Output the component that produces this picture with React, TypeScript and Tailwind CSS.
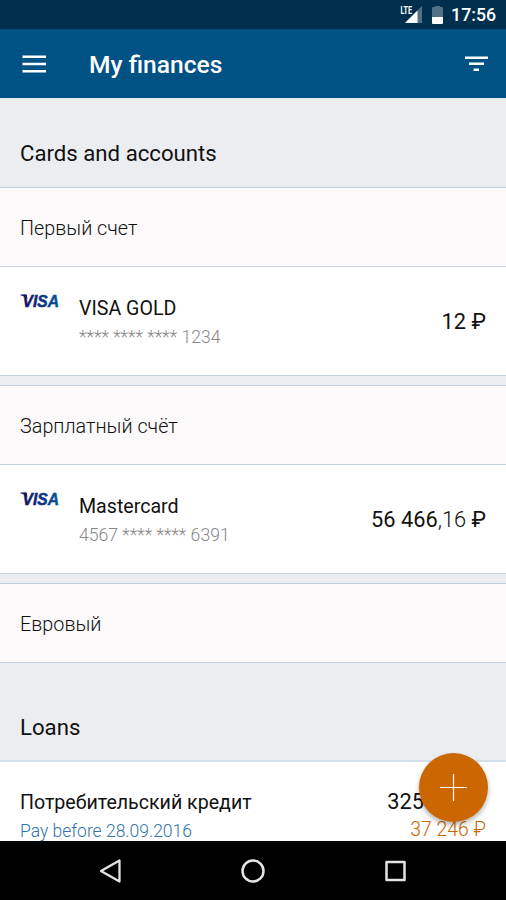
import type { ReactNode } from 'react';

const accounts = [
    {
        name: 'Первый счет',
        card: { title: 'VISA GOLD', number: '**** **** **** 1234', whole: '12', cents: '' }
    },
    {
        name: 'Зарплатный счёт',
        card: { title: 'Mastercard', number: '4567 **** **** 6391', whole: '56 466', cents: ',16' }
    }
];

export default function App() {
    return (
        <div className="relative flex h-[900px] w-[506px] flex-col overflow-hidden bg-[#ebedf1] font-['Roboto',sans-serif] text-[#111]">
            <StatusBar />
            <AppBar />
            <main className="min-h-0 flex-1 overflow-hidden">
                <SectionTitle className="h-[89px] pt-[23px]">Cards and accounts</SectionTitle>
                {accounts.map((account) => (
                    <section key={account.name} className="mb-[9px] border-b border-[#c3d1df]">
                        <AccountName>{account.name}</AccountName>
                        <CardRow {...account.card} />
                    </section>
                ))}
                <AccountName>Евровый</AccountName>
                <SectionTitle className="h-[97px] pt-[32px]">Loans</SectionTitle>
                <LoanRow />
            </main>
            <NavigationBar />
            <button
                aria-label="Add"
                className="absolute top-[753px] left-[419px] flex size-[69px] items-center justify-center rounded-full bg-[#cb6601] shadow-[0_3px_5px_rgba(0,0,0,0.3)]"
            >
                <svg width="27" height="27" viewBox="0 0 27 27" stroke="#fff" strokeWidth="1.2">
                    <path d="M13.5 0v27M0 13.5h27" />
                </svg>
            </button>
        </div>
    );
}

const StatusBar = () => (
    <div className="flex h-[29px] shrink-0 items-center justify-end bg-[#00304e] pr-[10px] text-white">
        <svg className="mr-[7px]" width="44" height="29" viewBox="0 0 44 29">
            <path d="M22 6v17H5z" fill="#507083" />
            <path d="M17.5 10.5V23H5z" fill="#fff" />
            <path d="M0 4.500h12.500v10h-12.500z" fill="#00304e" />
            <text x="0.500" y="13.700" fontSize="10.500" fontWeight="700" textLength="11.500" lengthAdjust="spacingAndGlyphs" fill="#fff">LTE</text>
            <path d="M32 8q0-1 1-1h2V6h5v1h2q1 0 1 1v10H32z" fill="#507083" />
            <path d="M32 17h11v6q0 1-1 1h-9q-1 0-1-1z" fill="#fff" />
        </svg>
        <span className="pt-[3px] text-[17.7px] leading-none font-medium">17:56</span>
    </div>
);

const AppBar = () => (
    <header className="flex h-[69px] shrink-0 items-center bg-[#005184] px-[17px] text-white">
        <svg width="34" height="34" viewBox="0 0 34 34" fill="#fff">
            <path d="M5.500 8.500h23.500v2.500h-23.500zM5.500 15.700h23.500v2.500h-23.500zM5.500 23h23.500v2.500h-23.500z" />
        </svg>
        <h1 className="ml-[38px] flex-1 pt-[4px] text-[24.6px] font-medium">My finances</h1>
        <svg width="34" height="34" viewBox="0 0 34 34" fill="#fff">
            <path d="M10 9.500h23v2.500h-23zM14 15.500h15v2.500h-15zM18.500 21.500h5.500v2.500h-5.500z" />
        </svg>
    </header>
);

const SectionTitle = ({ className, children }: { className: string; children: ReactNode }) => (
    <h2 className={`flex items-center px-5 text-[22.2px] ${className}`}>{children}</h2>
);

const AccountName = ({ children }: { children: ReactNode }) => (
    <h3 className="flex h-[80px] items-center border-y border-[#c3d1df] bg-[#fbf9fa] px-5 pt-[4px] text-[19.8px] font-light">
        {children}
    </h3>
);

type CardRowProps = { title: string; number: string; whole: string; cents: string };

const CardRow = ({ title, number, whole, cents }: CardRowProps) => (
    <div className="flex h-[108px] bg-white px-5">
        <div className="w-[59px] pt-[22px]">
            <VisaLogo />
        </div>
        <div className="flex-1 pt-[27px]">
            <div className="text-[19.6px] leading-[30px]">{title}</div>
            <div className="text-[17.6px] leading-[26px] font-light text-[#888]">{number}</div>
        </div>
        <div className="pt-[40px] text-[21.8px] leading-[30px]">
            {whole}
            <span className="font-light">{cents}</span> ₽
        </div>
    </div>
);

const VisaLogo = () => (
    <svg width="44" height="24" viewBox="0 0 44 24">
        <defs>
            <linearGradient id="visa" x1="0" x2="1" y1="0" y2="0">
                <stop offset="0" stopColor="#10105c" />
                <stop offset="1" stopColor="#06539b" />
            </linearGradient>
        </defs>
        <path d="M0.500 5.600h6l1 4.500Q4.500 6.800 0.500 6.200z" fill="#10105c" />
        <text x="2.500" y="17.500" fontSize="16.700" fontWeight="700" fontStyle="italic" fontFamily="Liberation Sans, sans-serif" textLength="36.500" lengthAdjust="spacingAndGlyphs" fill="url(#visa)" stroke="url(#visa)" strokeWidth="0.500">VISA</text>
    </svg>
);

const LoanRow = () => (
    <div className="flex h-[120px] justify-between border-t-2 border-[#d3dfea] bg-white px-5 pt-[25px]">
        <div>
            <div className="pt-px text-[19.6px] leading-[30px]">Потребительский кредит</div>
            <div className="text-[17.5px] leading-[26px] font-light text-[#2f74ab]">Pay before 28.09.2016</div>
        </div>
        <div className="text-right">
            <div className="text-[21.8px] leading-[30px]">325 000 ₽</div>
            <div className="text-[19.4px] leading-[26px] font-light text-[#cb6601]">37 246 ₽</div>
        </div>
    </div>
);

const NavigationBar = () => (
    <nav className="flex h-[59px] shrink-0 items-center justify-center gap-[118px] bg-black">
        <svg width="24" height="24" viewBox="0 0 24 24" fill="none" stroke="#e4e4e4" strokeWidth="2.300" strokeLinejoin="round">
            <path d="M20.500 1.500v21L2 12z" />
        </svg>
        <svg width="24" height="24" viewBox="0 0 24 24" fill="none" stroke="#e4e4e4" strokeWidth="2.500">
            <circle cx="12" cy="12" r="10.500" />
        </svg>
        <svg width="24" height="24" viewBox="0 0 24 24" fill="none" stroke="#e4e4e4" strokeWidth="2.500" strokeLinejoin="round">
            <path d="M3.500 3h18v18h-18z" />
        </svg>
    </nav>
);
